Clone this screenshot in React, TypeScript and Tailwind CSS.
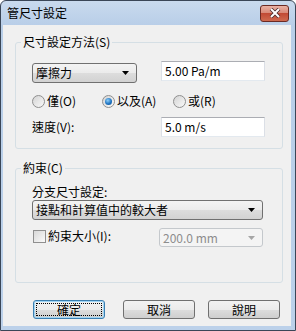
import type { ReactNode } from 'react';

const font = "font-['Noto_Sans_CJK_TC','Noto_Sans_CJK_SC',sans-serif]";

function Arrow({ disabled }: { disabled?: boolean }) {
  return (
    <svg width="7" height="4" viewBox="0 0 7 4" className="shrink-0">
      <path d="M0 0H7L3.5 4Z" fill={disabled ? '#a6a6a6' : '#000'} />
    </svg>
  );
}

interface ComboProps {
  value: string;
  disabled?: boolean;
  className?: string;
}

function Combo({ value, disabled, className }: ComboProps) {
  return (
    <div
      className={`flex items-center justify-between rounded-[3px] border pl-[3px] pr-[7px] text-[12px] leading-[14px] ${
        disabled
          ? 'border-[#c4c8cc] bg-[#f4f4f4] text-[#8d8d8d]'
          : 'border-[#707070] bg-[linear-gradient(#f3f3f3,#ebebeb_50%,#dddddd_50%,#d2d2d2)] text-black'
      } ${className ?? ''}`}
    >
      <span>{value}</span>
      <Arrow disabled={disabled} />
    </div>
  );
}

function TextBox({ value, className }: { value: string; className?: string }) {
  return (
    <div
      className={`flex items-center border border-[#abadb3] border-x-[#dbdfe6] border-b-[#e3e9ef] bg-white pl-[3px] text-[12px] leading-[14px] ${className ?? ''}`}
    >
      {value}
    </div>
  );
}

function Radio({ label, checked, className }: { label: string; checked?: boolean; className?: string }) {
  return (
    <div className={`flex items-center gap-[2px] ${className ?? ''}`}>
      <div className="flex h-[13px] w-[13px] items-center justify-center rounded-full border border-[#8f8f8f] bg-[linear-gradient(135deg,#d4d4d4,#f9f9f9)]">
        {checked && (
          <div className="h-[7px] w-[7px] rounded-full bg-[radial-gradient(circle_at_40%_35%,#8fd0fa,#1f74c2_55%,#0c4e8c)]" />
        )}
      </div>
      <span className="text-[12px] leading-[14px]">{label}</span>
    </div>
  );
}

function Group({ title, children, className }: { title: string; children: ReactNode; className?: string }) {
  return (
    <fieldset className={`rounded-[3px] border border-[#d5dfe5] ${className ?? ''}`}>
      <legend className="ml-[5px] px-[2px] text-[12px] leading-[14px]">{title}</legend>
      {children}
    </fieldset>
  );
}

function Button({ label, primary, className }: { label: string; primary?: boolean; className?: string }) {
  return (
    <div
      className={`flex h-[19px] w-[72px] items-center justify-center rounded-[3px] border text-[12px] leading-[14px] ${
        primary
          ? 'border-[#3c7fb1] bg-[linear-gradient(#f2f2f2,#ebebeb_50%,#dddddd_50%,#cfcfcf)] shadow-[inset_0_0_0_1px_#9fd5f5] outline-1 outline-dotted outline-offset-[-4px] outline-black'
          : 'border-[#707070] bg-[linear-gradient(#f2f2f2,#ebebeb_50%,#dddddd_50%,#cfcfcf)]'
      } ${className ?? ''}`}
    >
      {label}
    </div>
  );
}

function CloseButton() {
  return (
    <div className="ml-auto flex h-[17px] w-[29px] items-center justify-center rounded-[3px] border border-[#6b2a24] bg-[linear-gradient(#eab1a4,#d98a79_45%,#c24a35_50%,#cf6a4f)]">
      <svg width="12" height="10" viewBox="0 0 12 10">
        <path d="M2 1L10 9M10 1L2 9" stroke="#4a2a2a" strokeWidth="3.6" />
        <path d="M2 1L10 9M10 1L2 9" stroke="#fff" strokeWidth="2" />
      </svg>
    </div>
  );
}

export default function App() {
  return (
    <div
      className={`flex h-[331px] w-[296px] flex-col rounded-t-[6px] border border-[#3a4657] bg-[linear-gradient(#c9daee,#b8cee8_25px,#bcd1ea)] text-black ${font}`}
    >
      {/* Title bar */}
      <div className="flex h-[24px] items-center pl-[6px] pr-[6px]">
        <span className="text-[12px] leading-[14px]">管尺寸設定</span>
        <CloseButton />
      </div>

      {/* Client area */}
      <div className="mb-[4px] ml-[2px] mr-[4px] flex flex-1 flex-col bg-[#f0f0f0]">
        <Group title="尺寸設定方法(S)" className="ml-[12px] mr-[8px] mt-[10px]">
          <div className="pb-[11px] pl-[16px] pt-[12px]">
            <div className="flex items-start">
              <Combo value="摩擦力" className="mt-[2px] h-[20px] w-[105px]" />
              <TextBox value="5.00 Pa/m" className="ml-[24px] h-[20px] w-[104px]" />
            </div>
            <div className="mt-[10px] flex h-[16px] items-center">
              <Radio label="僅(O)" className="w-[70px]" />
              <Radio label="以及(A)" checked className="w-[71px]" />
              <Radio label="或(R)" />
            </div>
            <div className="mt-[8px] flex items-center">
              <span className="w-[129px] text-[12px] leading-[14px]">速度(V):</span>
              <TextBox value="5.0 m/s" className="h-[20px] w-[104px]" />
            </div>
          </div>
        </Group>

        <Group title="約束(C)" className="ml-[12px] mr-[8px] mt-[12px]">
          <div className="pb-[35px] pl-[16px] pt-[10px]">
            <div className="text-[12px] leading-[14px]">分支尺寸設定:</div>
            <Combo value="接點和計算值中的較大者" className="mt-[1px] h-[20px] w-[231px]" />
            <div className="mt-[8px] flex items-start">
              <div className="flex w-[127px] items-center gap-[2px] pl-[1px] pt-[1px]">
                <div className="h-[13px] w-[13px] border border-[#8f8f8f] bg-[linear-gradient(135deg,#d8d8d8,#fafafa)] p-[1px]" />
                <span className="text-[12px] leading-[14px]">約束大小(I):</span>
              </div>
              <Combo value="200.0 mm" disabled className="h-[19px] w-[104px]" />
            </div>
          </div>
        </Group>

        <div className="mt-[17px] flex">
          <Button label="確定" primary className="ml-[30px]" />
          <Button label="取消" className="ml-[18px]" />
          <Button label="說明" className="ml-[13px]" />
        </div>
      </div>
    </div>
  );
}
